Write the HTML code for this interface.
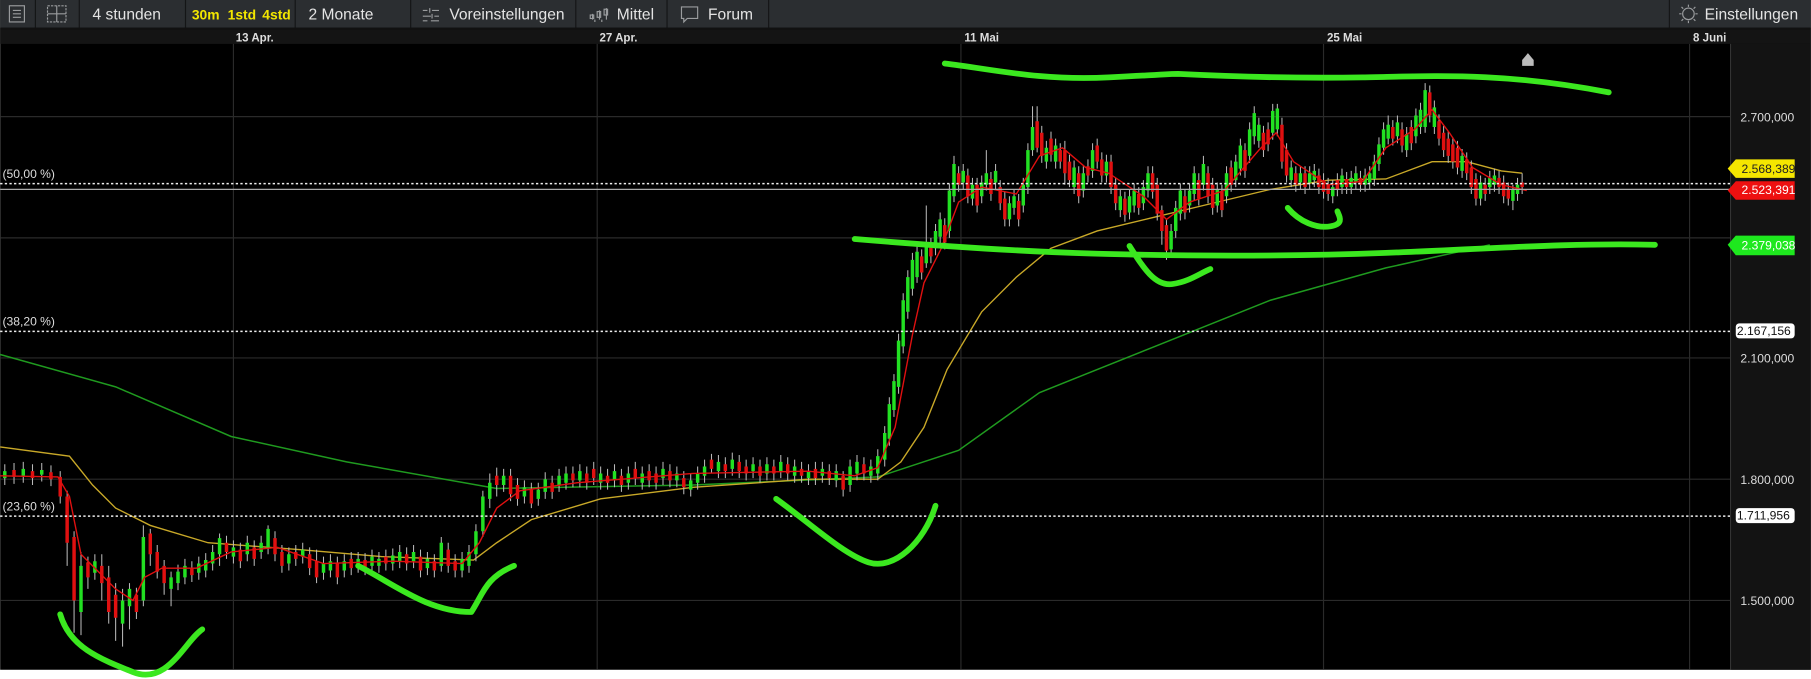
<!DOCTYPE html>
<html><head><meta charset="utf-8"><style>
html,body{margin:0;padding:0;background:#fff;overflow:hidden}
svg{display:block}
text{font-family:"Liberation Sans",Arial,sans-serif}
</style></head><body>
<svg width="1811" height="679" viewBox="0 0 1568 588" xmlns="http://www.w3.org/2000/svg">
<rect x="0" y="0" width="1568" height="580" fill="#000"/>
<rect x="0" y="0" width="1568" height="24" fill="#2b2e31"/>
<rect x="0" y="24" width="1568" height="2" fill="#111"/>
<g fill="#141516">
<rect x="30" y="0" width="1" height="24"/><rect x="68" y="0" width="1" height="24"/><rect x="160" y="0" width="1" height="24"/><rect x="255" y="0" width="1" height="24"/><rect x="355" y="0" width="1" height="24"/><rect x="498" y="0" width="1" height="24"/><rect x="577" y="0" width="1" height="24"/><rect x="665" y="0" width="1" height="24"/><rect x="1445" y="0" width="1" height="24"/>
</g>
<g fill="none" stroke="#9a9c9e" stroke-width="1">
<rect x="8" y="5" width="13" height="14"/><path d="M11 9h7M11 12h7M11 15h7"/>
<rect x="41" y="5" width="16" height="14" stroke-dasharray="2 1"/><path d="M49 5v14M41 12h16"/>
<path d="M366 9h4M374 9h6M366 14h7M376 14h4M366 18h4M373 18h7M372 7v4M374 12v4"/>
<path d="M513 17v-5M519 17v-8M525 17v-10M515 19v-2M521 19v-2"/><rect x="511" y="13" width="3" height="3"/><rect x="517" y="10" width="3" height="5"/><rect x="523" y="8" width="3" height="5"/>
<path d="M590 6h14v10h-9l-3 3v-3h-2z"/>
<circle cx="1462" cy="12" r="5"/><path d="M1462 4v2M1462 18v2M1454 12h2M1468 12h2M1456 6l1.5 1.5M1468 6l-1.5 1.5M1456 18l1.5-1.5M1468 18l-1.5-1.5"/>
</g>
<g font-size="13.5" fill="#e4e4e4">
<text x="80" y="17">4 stunden</text><text x="267" y="17">2 Monate</text><text x="389" y="17">Voreinstellungen</text><text x="534" y="17">Mittel</text><text x="613" y="17">Forum</text><text x="1476" y="17">Einstellungen</text>
</g>
<g font-size="12" fill="#f2e600" font-weight="bold"><text x="166" y="17">30m</text><text x="197" y="17">1std</text><text x="227" y="17">4std</text></g>
<rect x="0" y="26" width="1568" height="12" fill="#141414"/>
<g font-size="10" fill="#ddd" font-weight="bold"><text x="204" y="36">13 Apr.</text><text x="519" y="36">27 Apr.</text><text x="835" y="36">11 Mai</text><text x="1149" y="36">25 Mai</text><text x="1466" y="36">8 Juni</text></g>
<rect x="1499" y="38" width="69" height="542" fill="#131313"/>
<rect x="1498" y="38" width="1" height="542" fill="#333"/>
<g stroke="#2a2a2a" stroke-width="1">
<path d="M202 38V580M517 38V580M832 38V580M1146 38V580M1463 38V580"/>
<path d="M0 101H1498M0 206H1498M0 310H1498M0 415H1498M0 520H1498"/>
</g>
<g font-size="10.5" fill="#ddd"><text x="1507" y="105">2.700,000</text><text x="1507" y="314">2.100,000</text><text x="1507" y="419">1.800,000</text><text x="1507" y="524">1.500,000</text></g>

<!-- long MA -->
<path d="M0 307L100 335L200 378L300 400L430 423L600 420L760 413L830 390L900 340L1000 300L1100 260L1200 232L1290 212" fill="none" stroke="#1f9a1f" stroke-width="1.3"/>
<!-- mid MA -->
<path d="M0 387L60 395L80 420L100 440L130 455L180 470L260 476L330 482L410 485L430 470L460 450L520 432L600 422L700 415L760 415L780 400L800 370L820 320L850 270L880 240L910 215L950 200L1000 188L1050 176L1100 164L1150 156L1200 155L1240 140L1270 140L1300 148L1318 150" fill="none" stroke="#c8a828" stroke-width="1.2"/>
<!-- wicks -->
<path stroke="#b8b8b8" stroke-width="0.9" fill="none" d="M4 402V420M12 401V419M20 400V418M28 402V420M36 401V417M44 403V421M52 408V436M58 425V490M64 460V548M70 478V550M76 482V510M82 480V502M88 480V520M94 490V540M100 505V555M106 510V560M112 505V545M118 509V536M124 455V525M130 458V490M136 472V501M142 485V515M148 495V525M154 489V511M160 484V506M166 486V504M172 482V502M178 479V500M184 472V494M190 462V490M196 464V484M202 468V488M208 470V492M214 464V486M220 468V490M226 464V484M232 455V480M238 460V486M244 472V496M250 474V494M256 472V490M262 470V488M268 474V498M274 476V505M280 482V502M286 480V500M292 482V506M298 480V500M304 478V498M310 478V496M316 479V498M322 476V496M328 478V496M334 476V494M340 475V494M346 472V492M352 474V494M358 472V492M364 476V500M370 478V498M376 480V500M382 465V495M388 470V496M394 480V500M400 478V500M406 472V496M412 454V486M418 425V465M424 410V440M430 405V430M436 406V426M442 406V434M448 414V438M454 416V436M460 418V440M466 418V438M472 409V432M478 412V432M484 406V426M490 404V424M496 404V422M502 402V422M508 404V424M514 400V420M520 404V424M526 406V424M532 402V422M538 406V426M544 404V424M550 400V420M556 404V424M562 402V422M568 404V424M574 400V420M580 402V422M586 404V422M592 408V428M598 410V430M604 404V424M610 398V418M616 393V410M622 394V414M628 396V414M634 392V412M640 394V414M646 398V416M652 396V414M658 398V418M664 396V416M670 398V416M676 394V414M682 396V416M688 398V418M694 400V418M700 402V420M706 400V420M712 400V418M718 402V420M724 402V422M730 408V430M736 398V426M742 394V416M748 396V416M754 398V418M760 389V416M766 369V404M770 344V386M774 324V361M778 289V341M782 254V306M786 234V276M790 219V256M794 210V245M798 216V242M802 178V232M806 206V228M810 194V221M814 184V211M818 189V216M822 159V206M826 135V175M830 144V166M834 142V164M838 146V176M842 154V178M846 154V184M850 152V176M854 130V165M858 149V174M862 142V164M866 156V182M870 166V196M874 170V196M878 164V186M882 168V196M886 154V184M890 124V168M894 92V135M898 92V132M902 109V141M906 122V146M910 114V140M914 120V146M918 124V146M922 122V160M926 134V162M930 139V168M934 144V176M938 144V171M942 138V158M946 124V154M950 120V146M954 132V158M958 134V158M962 134V168M966 154V182M970 164V188M974 166V192M978 164V190M982 159V184M986 162V186M990 156V182M994 144V171M998 144V172M1002 154V191M1006 178V212M1010 190V225M1014 194V222M1018 174V206M1022 159V191M1026 164V190M1030 159V184M1034 144V174M1038 150V178M1042 135V165M1046 144V176M1050 154V186M1054 158V184M1058 160V188M1062 144V176M1066 139V166M1070 134V162M1074 120V152M1078 124V154M1082 106V141M1086 92V125M1090 102V128M1094 109V136M1098 106V131M1102 90V121M1106 90V118M1110 102V146M1114 124V158M1118 139V162M1122 144V166M1126 144V164M1130 144V168M1134 144V164M1138 142V162M1142 146V168M1146 150V172M1150 154V174M1154 156V176M1158 150V170M1162 146V168M1166 149V168M1170 148V168M1174 144V164M1178 148V166M1182 146V166M1186 144V164M1190 134V161M1194 119V148M1198 106V134M1202 100V125M1206 104V126M1210 100V124M1214 106V132M1218 110V136M1222 104V130M1226 94V124M1230 89V116M1234 72V115M1238 74V106M1242 87V116M1246 99V126M1250 109V136M1254 114V141M1258 119V146M1262 122V151M1266 129V154M1270 132V156M1274 139V168M1278 150V178M1282 152V178M1286 154V174M1290 148V168M1294 146V166M1298 148V168M1302 152V176M1306 158V178M1310 160V182M1314 154V174M1318 150V168"/>
<!-- green bodies -->
<path stroke="#22e022" stroke-width="3" fill="none" d="M4 408V414M20 406V412M36 407V411M70 490V530M82 486V496M106 520V540M112 510V525M124 465V520M148 500V510M154 495V505M160 490V500M172 488V496M178 485V494M184 478V488M190 466V480M202 474V482M214 470V480M226 470V478M232 458V474M250 480V488M262 476V482M280 488V496M286 486V494M298 486V494M310 484V490M322 482V490M328 484V490M340 481V488M346 478V486M358 478V486M370 484V492M382 470V490M400 484V494M406 478V490M412 460V480M418 430V460M424 418V432M436 412V420M454 422V430M466 424V432M472 415V426M484 412V420M490 410V418M502 408V416M520 410V418M532 408V416M544 410V418M556 410V418M574 406V414M586 410V416M598 416V424M604 410V418M610 404V412M622 400V408M634 398V406M652 402V408M664 402V410M676 400V408M688 404V412M700 408V414M712 406V412M724 408V416M736 404V420M742 400V410M754 404V412M760 395V410M766 375V398M770 350V380M774 330V355M778 295V335M782 260V300M786 240V270M790 225V250M794 218V240M802 210V228M810 200V215M814 190V205M822 165V200M826 142V170M834 148V158M842 160V172M850 158V170M854 150V160M862 148V158M874 176V190M878 170V180M886 160V178M890 130V162M894 110V130M906 128V140M914 126V140M930 145V162M938 150V165M946 130V148M958 140V152M970 170V182M978 170V184M982 165V178M990 162V176M994 150V165M1014 200V216M1018 180V200M1022 165V185M1030 165V178M1034 150V168M1042 142V160M1054 164V178M1062 150V170M1070 140V156M1074 126V146M1082 112V135M1086 98V118M1090 108V122M1102 96V115M1106 94V112M1118 145V156M1126 150V158M1134 150V158M1138 148V156M1154 162V170M1162 152V162M1170 154V162M1174 150V158M1182 152V160M1186 150V158M1190 140V155M1194 125V142M1198 112V128M1202 108V120M1210 106V118M1218 116V130M1226 100V118M1230 95V110M1234 78V110M1242 93V110M1266 135V148M1282 158V172M1290 154V162M1294 152V160M1310 164V174M1314 160V168"/>
<!-- red bodies -->
<path stroke="#e01010" stroke-width="3" fill="none" d="M12 407V413M28 408V414M44 409V415M52 413V430M58 430V470M64 465V520M76 487V500M88 490V505M94 500V530M100 515V535M118 515V530M130 462V480M136 478V495M142 490V505M166 492V498M196 470V478M208 476V486M220 474V484M238 466V480M244 478V490M256 478V484M268 480V492M274 486V500M292 488V500M304 484V492M316 485V492M334 482V488M352 480V488M364 482V494M376 486V494M388 476V490M394 486V494M430 412V420M442 412V428M448 420V432M460 424V436M478 418V426M496 410V416M508 410V418M514 406V414M526 412V418M538 412V420M550 406V414M562 408V416M568 410V418M580 408V416M592 414V422M616 398V406M628 402V408M640 400V408M646 404V410M658 404V412M670 404V410M682 402V410M694 406V412M706 406V414M718 408V414M730 412V424M748 402V410M798 222V236M806 212V222M818 195V210M830 150V160M838 152V170M846 160V178M858 155V168M866 162V176M870 172V190M882 174V190M898 105V128M902 115V135M910 120V134M918 130V140M922 130V150M926 140V156M934 150V170M942 144V152M950 126V140M954 138V152M962 140V162M966 160V176M974 172V186M986 168V180M998 150V166M1002 160V185M1006 182V200M1010 195V217M1026 170V184M1038 156V172M1046 150V170M1050 160V180M1058 166V182M1066 145V160M1078 130V148M1094 115V130M1098 112V125M1110 108V140M1114 130V152M1122 150V160M1130 150V162M1142 152V162M1146 156V166M1150 160V168M1158 156V164M1166 155V162M1178 154V160M1206 110V120M1214 112V126M1222 110V124M1238 80V100M1246 105V120M1250 115V130M1254 120V135M1258 125V140M1262 128V145M1270 138V150M1274 145V162M1278 155V172M1286 160V168M1298 154V162M1302 158V170M1306 164V172M1318 158V162"/>
<!-- short MA -->
<path d="M0 412L50 413L60 430L70 480L85 495L100 510L115 520L125 500L140 492L170 492L200 478L240 474L280 488L340 486L400 488L415 470L430 440L450 425L500 418L600 410L700 408L740 412L760 405L775 370L790 290L800 245L815 215L830 175L850 162L880 168L900 135L920 128L940 145L960 150L990 170L1010 190L1030 175L1060 165L1090 130L1105 115L1120 140L1150 160L1180 157L1200 128L1225 112L1240 95L1255 115L1275 145L1300 160L1322 165" fill="none" stroke="#e01010" stroke-width="1.2"/>

<g stroke="#eee" stroke-width="1.3" stroke-dasharray="2 2"><path d="M0 159H1498M0 287H1498M0 447H1498"/></g>
<path d="M0 164H1498" stroke="#aaa" stroke-width="1"/>
<g font-size="10.5" fill="#ddd"><text x="2" y="154">(50,00 %)</text><text x="2" y="282">(38,20 %)</text><text x="2" y="442">(23,60 %)</text></g>
<g font-size="10.5">
<rect x="1503" y="280" width="51" height="13" rx="3" fill="#fff"/><text x="1504" y="290" fill="#111">2.167,156</text>
<rect x="1503" y="440" width="51" height="13" rx="3" fill="#fff"/><text x="1504" y="450" fill="#111">1.711,956</text>
<path d="M1496 146l7-8h51v16h-51z" fill="#f5e600"/><text x="1508" y="150" fill="#222">2.568,389</text>
<path d="M1496 165l7-8h51v16h-51z" fill="#ee1010"/><text x="1508" y="168" fill="#fff">2.523,391</text>
<path d="M1496 212l7-8h51v17h-51z" fill="#1ee81e"/><text x="1508" y="216" fill="#fff">2.379,038</text>
</g>
<path d="M1318 52l5-6 5 6v5h-10z" fill="#bbb"/>
<g fill="none" stroke="#3be81f" stroke-width="5" stroke-linecap="round" stroke-linejoin="round">
<path d="M818 55C860 60 900 70 960 67S1010 64 1020 64C1060 66 1120 68 1180 67S1300 62 1393 80"/>
<path d="M740 207C800 212 880 218 960 220S1120 222 1200 219S1360 210 1433 212"/>
<path d="M978 213C990 232 1000 248 1015 246S1040 236 1048 233"/>
<path d="M1115 180C1125 192 1140 198 1152 196S1160 188 1158 183"/>
<path d="M672 432C700 452 730 480 752 487S800 470 810 438"/>
<path d="M52 532C60 560 85 570 115 582S160 555 175 545"/>
<path d="M310 490C340 505 370 530 408 530C418 515 420 500 445 490"/>
</g>
</svg>
</body></html>
